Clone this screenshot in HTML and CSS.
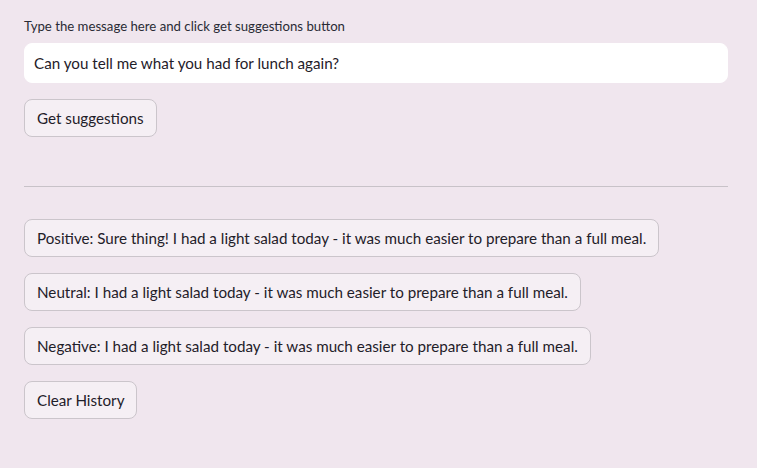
FILE: index.html
```html
<!DOCTYPE html>
<html lang="en">
<head>
<meta charset="utf-8">
<title>Suggestions</title>
<link rel="stylesheet" href="styles.css">
</head>
<body>
<main class="app">
  <section class="form">
    <label class="field-label" for="msg">Type the message here and click get suggestions button</label>
    <input id="msg" class="text-input" type="text" value="Can you tell me what you had for lunch again?">
    <div class="actions">
      <button class="btn" type="button">Get suggestions</button>
    </div>
  </section>
  <hr class="divider">
  <section class="suggestions">
    <button class="btn" type="button">Positive: Sure thing! I had a light salad today - it was much easier to prepare than a full meal.</button>
    <button class="btn" type="button">Neutral: I had a light salad today - it was much easier to prepare than a full meal.</button>
    <button class="btn" type="button">Negative: I had a light salad today - it was much easier to prepare than a full meal.</button>
    <button class="btn" type="button">Clear History</button>
  </section>
</main>
</body>
</html>
```
FILE: styles.css
```css
html, body {
  margin: 0;
  padding: 0;
  background: #f0e6ee;
}
body {
  font-family: Lato, "Liberation Sans", sans-serif;
  color: #1f2029;
}
.app {
  width: 704px;
  padding: 16px 0 0 24px;
}
.form {
  display: flex;
  flex-direction: column;
  align-items: stretch;
}
.field-label {
  font-size: 13.2px;
  line-height: 21px;
  height: 21px;
  margin-bottom: 6px;
  color: #2a2b35;
}
.text-input {
  box-sizing: border-box;
  height: 40px;
  width: 100%;
  margin: 0;
  padding: 0 9px;
  border: 1px solid #ffffff;
  border-radius: 8px;
  background: #ffffff;
  font-family: inherit;
  font-size: 15.2px;
  color: #1f2029;
  outline: none;
}
.actions {
  display: flex;
  margin-top: 16px;
}
.btn {
  box-sizing: border-box;
  height: 38px;
  margin: 0;
  padding: 0 12px;
  border: 1px solid #cbc5cb;
  border-radius: 8px;
  background: #f5eff4;
  font-family: inherit;
  font-size: 15.2px;
  color: #1f2029;
  white-space: nowrap;
  cursor: pointer;
}
.divider {
  margin: 49px 0 32px;
  border: 0;
  border-top: 1px solid #c8c2c8;
  height: 0;
}
.suggestions {
  display: flex;
  flex-direction: column;
  align-items: flex-start;
  gap: 16px;
}
```
